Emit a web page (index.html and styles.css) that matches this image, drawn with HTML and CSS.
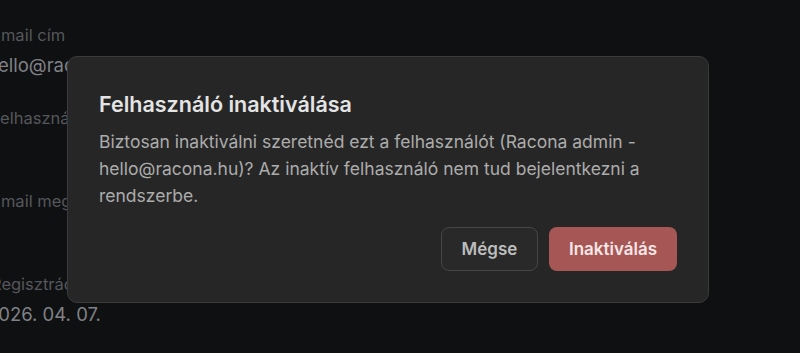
FILE: index.html
```html
<!DOCTYPE html>
<html lang="hu">
<head>
    <meta charset="UTF-8">
    <meta name="viewport" content="width=device-width, initial-scale=1.0">
    <title>Felhasználó inaktiválása</title>
    <link rel="stylesheet" href="styles.css">
</head>
<body>
    <div class="details">
        <div class="field">
            <span class="label">Email cím</span>
            <span class="value">hello@racona.hu</span>
        </div>
        <div class="field">
            <span class="label">Felhasználónév</span>
            <span class="value"></span>
        </div>
        <div class="field">
            <span class="label">Email megerősítve</span>
            <span class="value"></span>
        </div>
        <div class="field">
            <span class="label">Regisztráció</span>
            <span class="value">2026. 04. 07.</span>
        </div>
    </div>

    <div class="overlay">
        <div class="dialog">
            <h3 class="dialog-title">Felhasználó inaktiválása</h3>
            <p class="dialog-text">Biztosan inaktiválni szeretnéd ezt a felhasználót (Racona admin - hello@racona.hu)? Az inaktív felhasználó nem tud bejelentkezni a rendszerbe.</p>
            <div class="dialog-actions">
                <button class="btn btn-cancel">Mégse</button>
                <button class="btn btn-danger">Inaktiválás</button>
            </div>
        </div>
    </div>
</body>
</html>
```
FILE: styles.css
```css
* {
    box-sizing: border-box;
}
body {
    margin: 0;
    height: 353px;
    overflow: hidden;
    background-color: #0f1012;
    font-family: Inter, "Noto Sans", sans-serif;
}
.details {
    display: flex;
    flex-direction: column;
    gap: 29px;
    margin-left: -9px;
    padding-top: 23px;
}
.field {
    display: flex;
    flex-direction: column;
    gap: 6px;
}
.label {
    font-size: 16.5px;
    line-height: 24px;
    color: #55575b;
}
.value {
    height: 24px;
    margin-left: -4px;
    font-size: 18.5px;
    line-height: 24px;
    color: #808286;
}
.overlay {
    position: fixed;
    inset: 0;
    display: flex;
    align-items: flex-start;
    padding: 56px 0 0 67px;
}
.dialog {
    width: 642px;
    height: 247px;
    padding: 31px;
    background-color: #262626;
    border: 1px solid #3a3a3a;
    border-radius: 10px;
    display: flex;
    flex-direction: column;
}
.dialog-title {
    margin: 0;
    font-size: 21.5px;
    font-weight: 600;
    line-height: 32px;
    color: #e4e4e4;
}
.dialog-text {
    margin: 8px 0 0;
    font-size: 17.5px;
    line-height: 27px;
    color: #acacac;
}
.dialog-actions {
    margin-top: auto;
    display: flex;
    justify-content: flex-end;
    gap: 11px;
}
.btn {
    height: 44px;
    border-radius: 8px;
    font-family: inherit;
    font-size: 17px;
    font-weight: 600;
    cursor: pointer;
}
.btn-cancel {
    width: 97px;
    background-color: #292929;
    border: 1px solid #464646;
    color: #bdbdbd;
}
.btn-danger {
    width: 128px;
    background-color: #a75656;
    border: none;
    color: #f3e6e6;
}
```
